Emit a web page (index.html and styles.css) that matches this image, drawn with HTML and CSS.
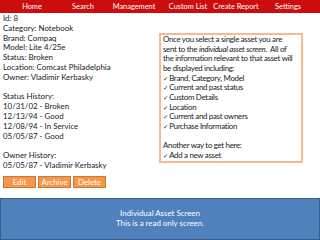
FILE: index.html
```html
<!DOCTYPE html>
<html lang="en">
<head>
  <meta charset="UTF-8">
  <title>Individual Asset Screen</title>
  <link rel="stylesheet" href="styles.css">
</head>
<body>
  <nav class="nav">
    <span class="nav-item">Home</span>
    <span class="nav-item">Search</span>
    <span class="nav-item">Management</span>
    <span class="nav-item">Custom List</span>
    <span class="nav-item">Create Report</span>
    <span class="nav-item">Settings</span>
  </nav>

  <div class="content">
    <div class="details">
      <p>Id: 8<br>
      Category: Notebook<br>
      Brand: Compaq<br>
      Model: Lite 4/25e<br>
      Status: Broken<br>
      Location: Comcast Philadelphia<br>
      Owner: Vladimir Kerbasky</p>

      <p>Status History:<br>
      10/31/02 - Broken<br>
      12/13/94 - Good<br>
      12/08/94 - In Service<br>
      05/05/87 - Good</p>

      <p>Owner History:<br>
      05/05/87 - Vladimir Kerbasky</p>

      <div class="actions">
        <span class="btn">Edit</span>
        <span class="btn">Archive</span>
        <span class="btn">Delete</span>
      </div>
    </div>

    <div class="note">
      <p>Once you select a single asset you are<br>
      sent to the <i>individual asset screen</i>.&nbsp; All of<br>
      the information relevant to that asset will<br>
      be displayed including:</p>
      <ul class="checks">
        <li>Brand, Category, Model</li>
        <li>Current and past status</li>
        <li>Custom Details</li>
        <li>Location</li>
        <li>Current and past owners</li>
        <li>Purchase Information</li>
      </ul>
      <p class="gap">Another way to get here:</p>
      <ul class="checks">
        <li>Add a new asset</li>
      </ul>
    </div>
  </div>

  <footer class="footer">
    Individual Asset Screen<br>
    This is a read only screen.
  </footer>
</body>
</html>
```

FILE: styles.css
```css
html, body { margin: 0; padding: 0; }
body { width: 320px; height: 240px; display: flex; flex-direction: column; overflow: hidden;
       font-family: Lato, "Liberation Sans", sans-serif; font-size: 7.9px; line-height: 9.8px; color: #1a1a1a;
       background: #fff; }
p { margin: 0; }

.nav { display: grid; grid-template-columns: 64px 38px 64px 44px 52px 52px; height: 13px;
       background: #cc0d0d; color: #fff; font-size: 7.4px; line-height: 13px; }
.nav-item { text-align: center; white-space: nowrap; }

.content { display: flex; }
.details { width: 159px; padding: 1px 0 0 3px; box-sizing: border-box; }
.details p + p { margin-top: 9.8px; }

.actions { display: flex; gap: 2px; margin-top: 5px; }
.btn { width: 31px; height: 10px; line-height: 10px; text-align: center; color: #fff;
       background: #f79646; border: 1px solid #c7793a; }

.note { width: 137px; margin-top: 20px; height: 126px; padding: 0 1px 0 2px; line-height: 9.65px;
        border: 2px solid #f9b98a; white-space: nowrap; letter-spacing: -0.3px; }
.gap { margin-top: 9.65px; }
.checks { list-style: none; margin: 0; padding: 0; }
.checks li::before { content: "\2713"; font-family: "DejaVu Sans", sans-serif; font-size: 6.5px;
                     line-height: 0; margin-right: 1px; }

.footer { margin-top: auto; height: 40px; display: flex; flex-direction: column; justify-content: center;
          text-align: center; color: #fff; background: #4f81bd; border: 1px solid #385d8a; }
```
